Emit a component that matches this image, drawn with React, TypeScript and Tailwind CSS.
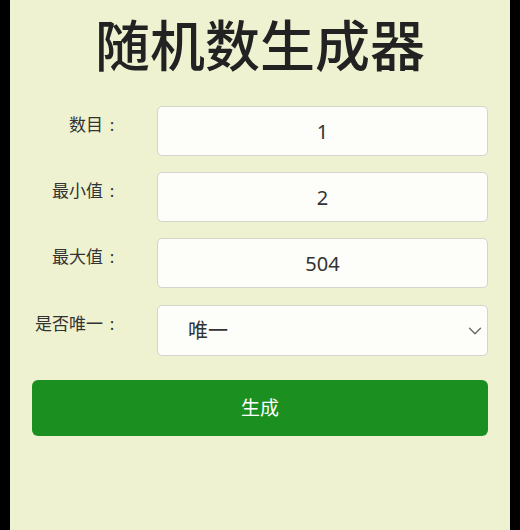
import { ChevronDown } from 'lucide-react';

const fields = [
    { label: '数目', value: '1' },
    { label: '最小值', value: '2' },
    { label: '最大值', value: '504' },
];

function Label({ text }: { text: string }) {
    return (
        <label className="flex w-[88px] justify-end pt-[6px] text-[17px] text-[#333]">
            <span>{text}</span>
            <span className="ml-[1px] w-[16px] text-center">:</span>
        </label>
    );
}

export default function App() {
    return (
        <div
            className="flex h-[530px] w-[520px] bg-black"
            style={{ fontFamily: '"Noto Sans", "Noto Sans CJK SC", sans-serif' }}
        >
            <div className="mx-[10px] flex-1 bg-[#eef2d0] px-[22px]">
                <h1 className="pt-[12px] text-center text-[55px] font-medium leading-[66px] text-[#222]">
                    随机数生成器
                </h1>

                <div className="mt-[28px] flex flex-col gap-[16px]">
                    {fields.map((f) => (
                        <div key={f.label} className="flex items-start">
                            <Label text={f.label} />
                            <input
                                readOnly
                                value={f.value}
                                className="ml-[37px] h-[50px] flex-1 rounded-[5px] border border-[#d4d4cc] bg-[#fdfdf9] text-center text-[20px] text-[#333] outline-none"
                            />
                        </div>
                    ))}

                    <div className="mt-[1px] flex items-start">
                        <Label text="是否唯一" />
                        <div className="relative ml-[37px] flex h-[51px] flex-1 items-center rounded-[5px] border border-[#d4d4cc] bg-[#fdfdf9] pl-[30px] text-[20px] text-[#333]">
                            唯一
                            <ChevronDown className="absolute right-[1px] top-[14px] h-[22px] w-[22px] text-[#666]" strokeWidth={1.4} />
                        </div>
                    </div>
                </div>

                <button
                    type="button"
                    className="mt-[24px] h-[56px] w-full rounded-[6px] bg-[#1b8f1f] text-[19px] text-white"
                >
                    生成
                </button>
            </div>
        </div>
    );
}
